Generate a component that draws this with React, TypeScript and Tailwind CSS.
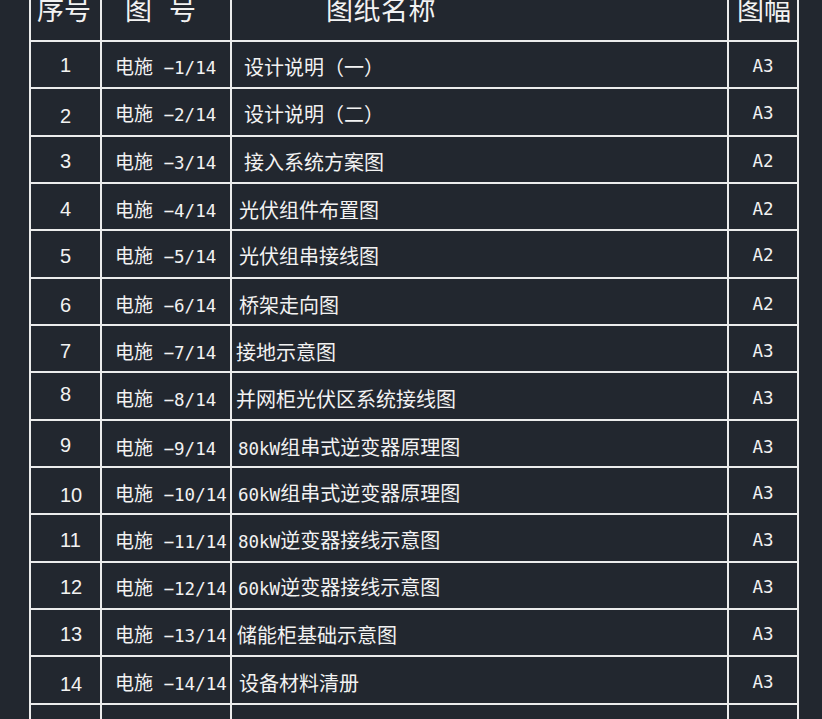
import React from 'react';

type Row = {
  no: string;
  code: string;
  name: string;
  size: string;
  nameX: number; // left padding of the name inside its cell
  noDy: number; // small vertical nudge of the sequence number
  textDy: number; // small vertical nudge of the other texts
  h: number; // row height incl. bottom line
};

const rows: Row[] = [
  { no: '1', code: '电施 −1/14', name: '设计说明（一）', size: 'A3', nameX: 12, noDy: 0, textDy: 2, h: 47 },
  { no: '2', code: '电施 −2/14', name: '设计说明（二）', size: 'A3', nameX: 12, noDy: 4, textDy: 2, h: 48 },
  { no: '3', code: '电施 −3/14', name: '接入系统方案图', size: 'A2', nameX: 12, noDy: 1, textDy: 2, h: 47 },
  { no: '4', code: '电施 −4/14', name: '光伏组件布置图', size: 'A2', nameX: 7, noDy: 2, textDy: 3, h: 47 },
  { no: '5', code: '电施 −5/14', name: '光伏组串接线图', size: 'A2', nameX: 7, noDy: 2, textDy: 2, h: 48 },
  { no: '6', code: '电施 −6/14', name: '桥架走向图', size: 'A2', nameX: 7, noDy: 3, textDy: 3, h: 47 },
  { no: '7', code: '电施 −7/14', name: '接地示意图', size: 'A3', nameX: 4, noDy: 2, textDy: 3, h: 47 },
  { no: '8', code: '电施 −8/14', name: '并网柜光伏区系统接线图', size: 'A3', nameX: 4, noDy: -2, textDy: 3, h: 48 },
  { no: '9', code: '电施 −9/14', name: '80kW组串式逆变器原理图', size: 'A3', nameX: 6, noDy: 1, textDy: 4, h: 47 },
  { no: '10', code: '电施 −10/14', name: '60kW组串式逆变器原理图', size: 'A3', nameX: 6, noDy: 4, textDy: 3, h: 47 },
  { no: '11', code: '电施 −11/14', name: '80kW逆变器接线示意图', size: 'A3', nameX: 6, noDy: 2, textDy: 3, h: 48 },
  { no: '12', code: '电施 −12/14', name: '60kW逆变器接线示意图', size: 'A3', nameX: 6, noDy: 1, textDy: 2, h: 47 },
  { no: '13', code: '电施 −13/14', name: '储能柜基础示意图', size: 'A3', nameX: 5, noDy: 1, textDy: 2, h: 47 },
  { no: '14', code: '电施 −14/14', name: '设备材料清册', size: 'A3', nameX: 7, noDy: 4, textDy: 3, h: 48 },
];

const cjk = "font-['Noto_Sans_CJK_SC',sans-serif]";

// half-width runs are drawn in a mono face, like the CAD text font
const Mixed: React.FC<{ text: string; small?: boolean }> = ({ text, small }) => {
  const parts = text.match(/[\x00-\x7F−]+|[^\x00-\x7F−]+/g) || [];
  return (
    <>
      {parts.map((p, i) =>
        /^[\x00-\x7F−]+$/.test(p) ? (
          <span key={i} className="font-['DejaVu_Sans_Mono',monospace] text-[17.5px] whitespace-pre">{p}</span>
        ) : (
          <span key={i} className={`${cjk} ${small ? 'text-[19px]' : 'text-[20px]'}`}>{p}</span>
        )
      )}
    </>
  );
};

const App: React.FC = () => {
  return (
    <div className="w-[822px] h-[719px] overflow-hidden bg-[#22272f] text-[#f2f2f2]">
      <div className="ml-[29px] mt-[-5px] w-[770px] border-l-2 border-[#ececec]">
        {/* header */}
        <div className={`flex h-[47px] ${cjk} text-[27px] leading-[27px]`}>
          <div className="w-[71px] shrink-0 border-r-2 border-b-2 border-[#ececec] pl-[6px]">序号</div>
          <div className="w-[130px] shrink-0 border-r-2 border-b-2 border-[#ececec] pl-[23px]">图<span className="ml-[17px]">号</span></div>
          <div className="w-[497px] shrink-0 border-r-2 border-b-2 border-[#ececec] pl-[94px] tracking-[0.5px]">图纸名称</div>
          <div className="w-[70px] shrink-0 border-r-2 border-b-2 border-[#ececec] pl-[8px]">图幅</div>
        </div>

        {rows.map(r => (
          <div key={r.no} className="flex" style={{ height: r.h }}>
            <div className="w-[71px] shrink-0 flex items-center border-r-2 border-b-2 border-[#ececec] pl-[29px] font-['Liberation_Sans',sans-serif] text-[20px] leading-none">
              <span style={{ marginTop: r.noDy * 2 }}>{r.no}</span>
            </div>
            <div className="w-[130px] shrink-0 flex items-center border-r-2 border-b-2 border-[#ececec] pl-[13px] leading-none whitespace-nowrap">
              <span style={{ marginTop: r.textDy * 2 }}><Mixed text={r.code} small /></span>
            </div>
            <div className="w-[497px] shrink-0 flex items-center border-r-2 border-b-2 border-[#ececec] leading-none whitespace-nowrap" style={{ paddingLeft: r.nameX }}>
              <span style={{ marginTop: r.textDy * 2 }}><Mixed text={r.name} /></span>
            </div>
            <div className="w-[70px] shrink-0 flex items-center justify-center border-r-2 border-b-2 border-[#ececec] leading-none">
              <span style={{ marginTop: r.textDy * 2 }}><Mixed text={r.size} /></span>
            </div>
          </div>
        ))}

        {/* next row, cut off by the window */}
        <div className="flex h-[40px]">
          <div className="w-[71px] shrink-0 border-r-2 border-[#ececec]" />
          <div className="w-[130px] shrink-0 border-r-2 border-[#ececec]" />
          <div className="w-[497px] shrink-0 border-r-2 border-[#ececec]" />
          <div className="w-[70px] shrink-0 border-r-2 border-[#ececec]" />
        </div>
      </div>
    </div>
  );
};

export default App;
